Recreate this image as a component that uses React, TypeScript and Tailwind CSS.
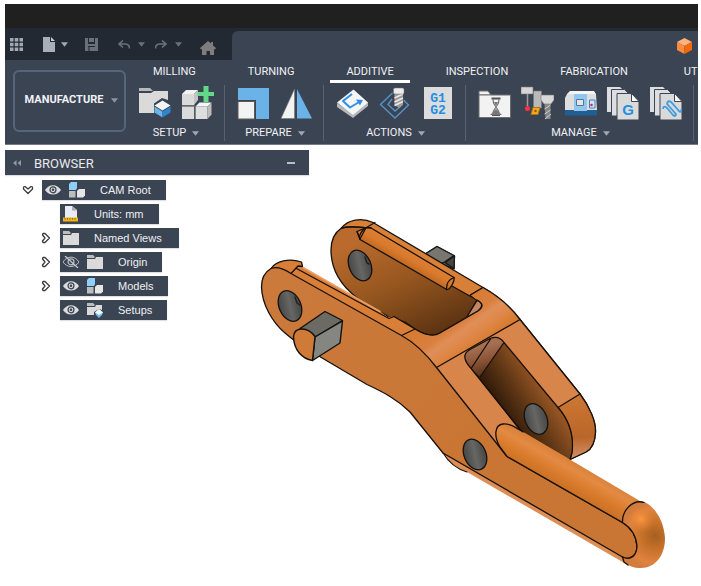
import type { ReactNode } from "react";
import { clsx } from "clsx";

function Caret({ className }: { className?: string }) {
  return (
    <svg viewBox="0 0 8 5" className={clsx("h-[5px] w-[7px] shrink-0", className)} aria-hidden>
      <path d="M0 0h8L4 5z" fill="currentColor" />
    </svg>
  );
}

/* ---------- Ribbon icons, drawn on a 33px grid ---------- */

function Icon({ children }: { children: ReactNode }) {
  return (
    <svg viewBox="0 0 33 35" className="h-[35px] w-[33px]" aria-hidden>
      {children}
    </svg>
  );
}

const icons = {
  newSetup: (
    <Icon>
      <path d="M1 3h11l3 3H1z" fill="#b9b9b9" />
      <path d="M1 8h12l3-2h14v9l-6-2-8 5.500v9.500H1z" fill="#dadada" />
      <path d="M24.500 15.500l8 5-8 5-8-5z" fill="#f4f5f6" />
      <path d="M16.500 21.500l8 5v6l-8-5z" fill="#6cb5ea" />
      <path d="M32.500 21.500l-8 5v6l8-5z" fill="#2b86cc" />
    </Icon>
  ),
  createStock: (
    <Icon>
      <path d="M1 9l4-4h12l-4 4z" fill="#f2f2f2" />
      <path d="M1 9h12v11H1zM1 21.500h12V34H1z" fill="#dadada" />
      <path d="M14.500 21.500l4-4h12l-4 4z" fill="#f6f6f6" />
      <path d="M14.500 21.500h12V34h-12z" fill="#dedede" />
      <path d="M26.500 21.500l4-4v12l-4 4.500z" fill="#bcbcbc" />
      <path d="M13 9l4-4v10l-4 5z" fill="#c4c4c4" />
      <path d="M1 20.700h13v13" fill="none" stroke="#6f747c" />
      <path d="M22.500 1h5v6h6v4h-6v6h-5v-6h-6V7h6z" fill="#62d987" />
    </Icon>
  ),
  orient: (
    <Icon>
      <path d="M1 3h31v31H19V15H1z" fill="#6ab2e8" />
      <path d="M1 16.500h16.500V34H1z" fill="#f3f3f3" stroke="#5a5a5a" />
    </Icon>
  ),
  mirror: (
    <Icon>
      <path d="M14.500 4v29.500H1z" fill="#f3f3f3" stroke="#777" strokeWidth="0.600" />
      <path d="M17 4v29.500h15z" fill="#6ab2e8" />
    </Icon>
  ),
  toolpath: (
    <Icon>
      <path d="M1 18l16 11 15-12v4L17 33 1 22z" fill="#b5b7b9" />
      <path d="M1 17.500L17.500 4.500 32 17.500 17 30z" fill="#f6f6f6" />
      <path d="M16 9l-9 7L14 22.500l10-6" fill="none" stroke="#2f8eea" strokeWidth="2" strokeLinejoin="round" />
      <path d="M20 14.500l7 .500-3 5.500z" fill="#2f8eea" />
    </Icon>
  ),
  simulate: (
    <Icon>
      <path d="M13.500 8L1.500 19.500 16 33l13.500-13-5-5M13 14l-4 5.500L16 26l6-5" fill="none" stroke="#5593c6" strokeWidth="1.400" />
      <path d="M15.500 7.500h8.500V20l-4 3-4.500-3z" fill="#9c9a98" />
      <path d="M15.500 13l8.500-4M15.500 17l8.500-4M15.500 20.500l8.500-4" stroke="#e8e8e8" strokeWidth="1.500" />
      <rect x="14.500" y="3" width="10.500" height="6" rx="1.500" fill="#ececec" stroke="#777" strokeWidth="0.500" />
    </Icon>
  ),
  postProcess: (
    <Icon>
      <path d="M2 2h28v32H2z" fill="#dcdcdc" />
      <text x="16" y="17" textAnchor="middle" fontSize="13" className="font-['Liberation_Mono',monospace] font-bold" fill="#218fe5">
        G1
      </text>
      <text x="16" y="29" textAnchor="middle" fontSize="13" className="font-['Liberation_Mono',monospace] font-bold" fill="#218fe5">
        G2
      </text>
    </Icon>
  ),
  taskManager: (
    <Icon>
      <path d="M1 6h9l3 4H1z" fill="#f2f2f2" stroke="#6e6e6e" />
      <path d="M1 10h31.500v22.500H1z" fill="#f2f2f2" stroke="#6e6e6e" />
      <path d="M13.500 13.500h9M14 30h8" stroke="#555" strokeWidth="2" />
      <path d="M15 14l.500 4 2.500 4-2.500 4-.500 4M21 14l-.500 4-2.500 4 2.500 4 .500 4" fill="none" stroke="#777" strokeWidth="1.200" />
      <path d="M16 17h4l-2 4zM12 30l6-6 6 6z" fill="#777" />
    </Icon>
  ),
  toolLibrary: (
    <Icon>
      <path d="M0 2h12v7H0z" fill="#d6d6d6" stroke="#777" strokeWidth="0.600" />
      <path d="M6.500 9v12" stroke="#9b9b9b" strokeWidth="1.500" />
      <circle cx="6.500" cy="23.500" r="2.500" fill="#ff303f" />
      <path d="M12.500 6h8v17h-8z" fill="#b9b9b9" stroke="#777" strokeWidth="0.600" />
      <path d="M12 22.500h7l-2 7h-7z" fill="#f3a91d" stroke="#b4750d" />
      <circle cx="14.500" cy="26" r="1.200" fill="#8a5a08" />
      <path d="M20 10h13v5l-3 4h-7l-3-4z" fill="#d8d8d8" stroke="#777" strokeWidth="0.600" />
      <path d="M23.500 19h6v15h-5z" fill="#87888a" />
      <path d="M23.500 24l6-4M23.500 29l6-4M24 34l6-5" stroke="#d0d0d0" />
    </Icon>
  ),
  machineLibrary: (
    <Icon>
      <path d="M6 6h24l2 3H3z" fill="#f5f5f5" />
      <path d="M3 9h29l1 16H1V13z" fill="#dedede" />
      <path d="M1 25h32v5.500H1z" fill="#1f5f93" />
      <path d="M10 9h13v17H10z" fill="#93c5ef" />
      <path d="M12.500 14.500h7v6h-7z" fill="#e5e5e5" stroke="#4a78a0" />
      <path d="M25.500 15h5.500v8h-5.500z" fill="#d2e3f2" stroke="#3584c5" />
      <circle cx="27.500" cy="20" r="1.300" fill="#e02853" />
    </Icon>
  ),
  postLibrary: (
    <Icon>
      <path d="M0 2h13l3 3v22H0z" fill="#dedee2" />
      <path d="M4.500 4.500h13l4 4V31h-17z" fill="#dedee2" stroke="#3b4453" />
      <path d="M10 8.500h14.500l7.500 8V35H10z" fill="#dadada" stroke="#3b4453" />
      <path d="M24.500 8.500v8H32z" fill="#fff" stroke="#3b4453" />
      <text x="21" y="30" textAnchor="middle" fontSize="15" className="font-['Liberation_Sans',sans-serif] font-bold" fill="#218fe5">
        G
      </text>
    </Icon>
  ),
  templateLibrary: (
    <Icon>
      <path d="M0 2h13l3 3v22H0z" fill="#dedee2" />
      <path d="M4.500 4.500h13l4 4V31h-17z" fill="#dedee2" stroke="#3b4453" />
      <path d="M10 8.500h14.500l7.500 8V35H10z" fill="#dadada" stroke="#3b4453" />
      <path d="M24.500 8.500v8H32z" fill="#fff" stroke="#3b4453" />
      <path
        d="M13 24c0-3 2-3 4-1l6 7c2 2 4 0 2-2l-7-8c-2-2 0-5 3-3l8 9c2 2 3 0 2-2"
        fill="none"
        stroke="#3f9be0"
        strokeWidth="1.800"
      />
    </Icon>
  ),
};

const groups = [
  {
    name: "SETUP",
    tools: [
      { label: "New Setup", icon: icons.newSetup },
      { label: "Create Stock", icon: icons.createStock },
    ],
  },
  {
    name: "PREPARE",
    tools: [
      { label: "Orient", icon: icons.orient },
      { label: "Mirror", icon: icons.mirror },
    ],
  },
  {
    name: "ACTIONS",
    tools: [
      { label: "Generate", icon: icons.toolpath },
      { label: "Simulate", icon: icons.simulate },
      { label: "Post Process", icon: icons.postProcess },
    ],
  },
  {
    name: "MANAGE",
    tools: [
      { label: "Task Manager", icon: icons.taskManager },
      { label: "Tool Library", icon: icons.toolLibrary },
      { label: "Machine Library", icon: icons.machineLibrary },
      { label: "Post Library", icon: icons.postLibrary },
      { label: "Template Library", icon: icons.templateLibrary },
    ],
  },
];

const tabs = ["MILLING", "TURNING", "ADDITIVE", "INSPECTION", "FABRICATION", "UTILITIES"];

function QuickAccess() {
  return (
    <div className="flex h-8 w-[227px] shrink-0 items-center pl-[5px] text-[#68707c]">
      <button type="button" aria-label="Data panel">
        <svg viewBox="0 0 13 13" className="size-[13px]" fill="#a3a9b4" aria-hidden>
          <path d="M0 0h3.500v3.500H0zM4.700 0h3.600v3.500H4.700zM9.500 0H13v3.500H9.500zM0 4.700h3.500v3.600H0zM4.700 4.700h3.600v3.600H4.700zM9.500 4.700H13v3.600H9.500zM0 9.500h3.500V13H0zM4.700 9.500h3.600V13H4.700zM9.500 9.500H13V13H9.500z" />
        </svg>
      </button>
      <button type="button" aria-label="File" className="ml-5 flex items-center gap-1.5 text-[#a3a9b4]">
        <svg viewBox="0 0 12 15" className="h-[15px] w-3" aria-hidden>
          <path d="M0 0h7v5h5v10H0z" fill="#a9aebb" />
          <path d="M8 0v4h4z" fill="#c8ccd4" />
        </svg>
        <Caret />
      </button>
      <button type="button" aria-label="Save" className="ml-[17px]">
        <svg viewBox="0 0 13 13" className="size-[13px]" aria-hidden>
          <path d="M0 0h3v6h7V0h3v13H0z" fill="#68707c" />
          <path d="M4 0h5v4H4z" fill="#68707c" />
          <path d="M3 8.500h7M4 8v5" stroke="#232932" />
        </svg>
      </button>
      <button type="button" aria-label="Undo" className="ml-5 flex items-center gap-2">
        <svg viewBox="0 0 12 9" className="h-[9px] w-3" aria-hidden>
          <path d="M1 4h6c3 0 4.500 1.500 4.500 4.500M5 .500L1 4l4 3.500" fill="none" stroke="currentColor" strokeWidth="1.600" />
        </svg>
        <Caret />
      </button>
      <button type="button" aria-label="Redo" className="ml-2.5 flex items-center gap-2">
        <svg viewBox="0 0 12 9" className="h-[9px] w-3" aria-hidden>
          <path d="M11 4H5C2 4 .500 5.500 .500 8.500M7 .500L11 4 7 7.500" fill="none" stroke="currentColor" strokeWidth="1.600" />
        </svg>
        <Caret />
      </button>
      <button type="button" aria-label="Home" className="mt-2 ml-[18px]">
        <svg viewBox="0 0 16 14" className="h-3.5 w-4" fill="#7d7d7d" aria-hidden>
          <path d="M8 0l3 2.500V1h2v3.500L16 7l-1 1.500-1-.500v6h-4v-4H6.500v4H2V8l-1 .500L0 7z" />
        </svg>
      </button>
    </div>
  );
}

function Ribbon() {
  return (
    <header className="overflow-hidden bg-[#232932] font-['Roboto',sans-serif] text-[11px] text-[#f0f1f3]">
      <div className="h-6 bg-[#202020]" />
      <div className="flex items-end">
        <QuickAccess />
        <div className="flex h-[29px] min-w-0 flex-1 items-center justify-end rounded-tl-md bg-[#3b4453] pr-1.5">
          <svg viewBox="0 0 15 16" className="h-4 w-[15px]" aria-hidden>
            <path d="M7.500 0L15 4 7.500 8 0 4z" fill="#ffb27b" />
            <path d="M0 4l7.500 4v8L0 12z" fill="#ff8c3e" />
            <path d="M15 4L7.500 8v8l7.500-4z" fill="#f36a0c" />
          </svg>
        </div>
      </div>
      <div className="flex border-b border-[#747b88] bg-[#3b4453] pl-2">
        <button
          type="button"
          className="mt-2.5 flex h-[62px] w-[113px] shrink-0 items-center justify-center gap-2 rounded-md border-2 border-[#56657a] pb-0.5 pl-1 font-bold"
        >
          MANUFACTURE
          <Caret className="text-[#8d96a4]" />
        </button>
        <div className="min-w-0 flex-1">
          <nav className="flex gap-5 pl-[11px]" aria-label="Workspaces">
            {tabs.map((tab) => (
              <a
                key={tab}
                href={`#${tab.toLowerCase()}`}
                className={clsx(
                  "border-b-[3px] px-4 pt-1 leading-4 last:pl-5",
                  tab === "ADDITIVE" ? "border-white" : "border-transparent"
                )}
              >
                {tab}
              </a>
            ))}
          </nav>
          <div className="flex pt-0.5 pb-[3px]">
            {groups.map((group) => (
              <section key={group.name} className="shrink-0 border-r border-[#566173] pr-2.5 pl-3">
                <div className="flex gap-2.5">
                  {group.tools.map((tool) => (
                    <button key={tool.label} type="button" aria-label={tool.label}>
                      {tool.icon}
                    </button>
                  ))}
                </div>
                <button type="button" className="mx-auto mt-[5px] flex items-center gap-1.5 leading-4">
                  {group.name}
                  <Caret className="text-[#a0a7b2]" />
                </button>
              </section>
            ))}
          </div>
        </div>
      </div>
    </header>
  );
}

/* ---------- Browser tree ---------- */

function Eye({ off }: { off?: boolean }) {
  return (
    <svg viewBox="0 0 16 12" className="h-3 w-4 shrink-0" aria-hidden>
      <path d="M0 6C4-.500 12-.500 16 6 12 12 4 12 0 6z" fill={off ? "none" : "#dedede"} stroke={off ? "#b9bdc4" : "none"} />
      <circle cx="8" cy="5.800" r="3" fill={off ? "none" : "#dedede"} stroke={off ? "#b9bdc4" : "#3b4453"} strokeWidth="1.200" />
      {off ? <path d="M2 0l13 12" stroke="#c9ccd1" strokeWidth="1.200" /> : <circle cx="8" cy="5.800" r="1.300" fill="#3b4453" />}
    </svg>
  );
}

const nodeIcons = {
  cubes: (
    <>
      <path d="M0 2l2-2h6v6L7 8H0z" fill="#8fd0fa" />
      <path d="M0 9h6.500v6.500H0z" fill="#bdbdbd" />
      <path d="M8 9l2-2h6v6.500l-2 2H8z" fill="#e6e6e6" />
    </>
  ),
  units: (
    <>
      <path d="M2 0h7l5 4v8H2z" fill="#e9ebf5" />
      <path d="M9 0v4.500h5z" fill="#a5a9b5" />
      <path d="M0 11.500h15V15.500H0z" fill="#efb51c" />
      <path d="M2 12v1.500M4.500 12v1.500M7 12v1.500M9.500 12v1.500M12 12v1.500" stroke="#8c650c" />
    </>
  ),
  folder: (
    <>
      <path d="M0 1h6l2 2-1 1H0z" fill="#bdbdbd" />
      <path d="M0 5h8l1-2h7v12H0z" fill="#dadada" />
    </>
  ),
  setups: (
    <>
      <path d="M0 1h6l2 2-1 1H0z" fill="#bdbdbd" />
      <path d="M0 5h8l1-2h6v5l-3-1-5 3v3H0z" fill="#dadada" />
      <path d="M12 7l4 3.500-1 2.500-3 3-3-3-1-2.500z" fill="#71b8ec" />
      <path d="M12 7l4 3.500-4 2.500-4-2.500z" fill="#f3f7fa" />
    </>
  ),
};

type TreeNode = {
  label: string;
  icon: keyof typeof nodeIcons;
  eye?: "on" | "off";
  expander?: "open" | "closed";
  root?: boolean;
};

const nodes: TreeNode[] = [
  { label: "CAM Root", icon: "cubes", eye: "on", expander: "open", root: true },
  { label: "Units: mm", icon: "units" },
  { label: "Named Views", icon: "folder", expander: "closed" },
  { label: "Origin", icon: "folder", eye: "off", expander: "closed" },
  { label: "Models", icon: "cubes", eye: "on", expander: "closed" },
  { label: "Setups", icon: "setups", eye: "on" },
];

function BrowserPanel() {
  return (
    <aside className="z-10 col-start-1 row-start-1 w-[304px] self-start">
      <div className="flex h-[25px] items-center bg-[#3b4453] pr-3.5 pl-2 text-[#e8eaed] shadow-[0_1px_1px_rgba(0,0,0,0.12)]">
        <svg viewBox="0 0 8 6" className="h-1.5 w-2" fill="#8f98a6" aria-hidden>
          <path d="M3.500 0v6L0 3zM8 0v6L4.500 3z" />
        </svg>
        <h2 className="ml-[13px] pt-0.5 font-['Roboto',sans-serif] text-[13px] leading-5">BROWSER</h2>
        <button type="button" aria-label="Collapse" className="ml-auto h-0.5 w-2 bg-[#b9bec7]" />
      </div>
      <ul className="mt-[5px] flex flex-col gap-1 font-['Liberation_Sans',sans-serif] text-[11px] text-[#eef0f2]">
        {nodes.map((node) => (
          <li key={node.label} className={clsx("flex h-5 items-center", node.root ? "pl-4" : "pl-[34px]")}>
            <div className="w-[21px] shrink-0">
              {node.expander && (
                <button type="button" aria-label={`Toggle ${node.label}`} className="ml-px flex">
                  <svg
                    viewBox="0 0 12 10"
                    className={clsx("h-2.5 w-3", node.expander === "closed" && "-rotate-90")}
                    fill="none"
                    stroke="#3c3c3c"
                    strokeWidth="1.300"
                    strokeLinejoin="round"
                    aria-hidden
                  >
                    <path d="M1.500 2l1.500-.500 3 2.500 3-2.500 1.500.500v2L6 8.500 1.500 4z" />
                  </svg>
                </button>
              )}
            </div>
            <div
              className={clsx(
                "flex h-5 items-center bg-[#3b4453] pl-[3px] shadow-[0_1px_1px_rgba(0,0,0,0.12)]",
                node.label === "Named Views" ? "pr-[17px]" : "pr-[15px]"
              )}
            >
              {node.eye && (
                <span className="mr-2">
                  <Eye off={node.eye === "off"} />
                </span>
              )}
              <svg viewBox="0 0 16 16" className="size-4" aria-hidden>
                {nodeIcons[node.icon]}
              </svg>
              <span className="ml-[15px] whitespace-nowrap">{node.label}</span>
            </div>
          </li>
        ))}
      </ul>
    </aside>
  );
}

/* ---------- 3D part ---------- */

function Hole({ x, y }: { x: number; y: number }) {
  return (
    <g transform={`translate(${x} ${y}) rotate(-24)`}>
      <ellipse rx="10.800" ry="16" fill="url(#bore)" stroke="#15110d" strokeWidth="1.300" />
    </g>
  );
}

function Part() {
  return (
    <svg
      viewBox="255 210 415 366"
      className="col-start-1 row-start-1 mt-[60px] ml-[250px] h-[366px] w-[415px]"
      role="img"
      aria-label="Lever part"
      strokeLinejoin="round"
      strokeLinecap="round"
    >
      <defs>
        <linearGradient id="bore" x1="0" y1="0" x2="1" y2="0.300">
          <stop offset="0" stopColor="#3f403d" />
          <stop offset="0.600" stopColor="#666764" />
          <stop offset="1" stopColor="#4b4c49" />
        </linearGradient>
        <linearGradient id="inner" gradientUnits="userSpaceOnUse" x1="375" y1="235" x2="425" y2="345">
          <stop offset="0" stopColor="#b96a2c" />
          <stop offset="0.450" stopColor="#95561f" />
          <stop offset="1" stopColor="#583011" />
        </linearGradient>
        <linearGradient id="face" gradientUnits="userSpaceOnUse" x1="270" y1="280" x2="470" y2="430">
          <stop offset="0" stopColor="#cb7a3c" />
          <stop offset="1" stopColor="#c97635" />
        </linearGradient>
        <linearGradient id="bridge" gradientUnits="userSpaceOnUse" x1="444" y1="313" x2="473" y2="354">
          <stop offset="0" stopColor="#d67b32" />
          <stop offset="0.350" stopColor="#d9803f" />
          <stop offset="0.500" stopColor="#e08e59" />
          <stop offset="0.700" stopColor="#de8747" />
          <stop offset="1" stopColor="#d47728" />
        </linearGradient>
        <linearGradient id="pocket" gradientUnits="userSpaceOnUse" x1="488" y1="395" x2="530" y2="368">
          <stop offset="0" stopColor="#2a1708" />
          <stop offset="0.500" stopColor="#5d3515" />
          <stop offset="1" stopColor="#945423" />
        </linearGradient>
        <linearGradient id="fillet" gradientUnits="userSpaceOnUse" x1="487" y1="375" x2="480" y2="347">
          <stop offset="0" stopColor="#54301a" />
          <stop offset="0.500" stopColor="#8a5234" />
          <stop offset="1" stopColor="#a56f52" />
        </linearGradient>
        <linearGradient id="handle" gradientUnits="userSpaceOnUse" x1="580" y1="465" x2="565" y2="492">
          <stop offset="0" stopColor="#d9813a" />
          <stop offset="0.250" stopColor="#e38a43" />
          <stop offset="0.600" stopColor="#d97b2c" />
          <stop offset="1" stopColor="#c76e24" />
        </linearGradient>
        <linearGradient id="tube" gradientUnits="userSpaceOnUse" x1="411" y1="251" x2="403" y2="265">
          <stop offset="0" stopColor="#dc7f36" />
          <stop offset="0.500" stopColor="#d9792c" />
          <stop offset="1" stopColor="#bd6823" />
        </linearGradient>
        <radialGradient id="cap" gradientUnits="userSpaceOnUse" cx="655" cy="536" r="34">
          <stop offset="0" stopColor="#a55f22" />
          <stop offset="0.350" stopColor="#c36f28" />
          <stop offset="0.800" stopColor="#df833e" />
          <stop offset="1" stopColor="#d17b3d" />
        </radialGradient>
        <radialGradient id="glow" gradientUnits="userSpaceOnUse" cx="641" cy="519" r="14">
          <stop offset="0" stopColor="#fb963f" />
          <stop offset="1" stopColor="#e07f32" stopOpacity="0" />
        </radialGradient>
        <linearGradient id="heel" gradientUnits="userSpaceOnUse" x1="577" y1="400" x2="582" y2="458">
          <stop offset="0" stopColor="#cb7532" />
          <stop offset="0.650" stopColor="#b8662a" />
          <stop offset="1" stopColor="#d49169" />
        </linearGradient>
      </defs>

      {/* far pin */}
      <g stroke="#181818" strokeWidth="1.300">
        <path d="M426 253.500L437 246.500 454.500 256l-.500 13-14-6z" fill="#5a5a56" />
        <path d="M426 253.500L437 246.500l17 9-9.500 6.500-5 2z" fill="#77776f" />
        <path d="M454.500 256l-9.500 6.500 9 6z" fill="#454542" />
      </g>

      {/* far arm: rim, inner wall and top */}
      <g stroke="#17100a" strokeWidth="1.300">
        <path
          d="M341.500 228C348 220 361 217 373 222.500L483 287.500C500 297 510 306 520 319.500L580 394C590 407 596 422 595.500 432C595 444 590 450 586 452L570 459.500L440 400L400 320L350 290z"
          fill="#d98038"
        />
        <path
          d="M341.500 228C334 233 331 241 331 250C331 270 342 286 356 297C367 305 378 310 388 316.500L405 322L415 329C423 334 432 338 440 333L467 317L477 300L451 285.500L360 239L357 231.500L366 227.700C357 227 349 226 341.500 228z"
          fill="url(#inner)"
        />
        <path d="M466.500 317.500L477 300.500C483 302 483 307 478 311z" fill="#c48563" />
        <path d="M477 300l-6.500-5L483 287.500" fill="none" />
        <path
          d="M371 228L454 277.500C455 281 450 290 446.700 289.500L360 239.500C358 236 362 230 366 227.700z"
          fill="url(#tube)"
        />
        <path d="M454 277.500c-5 2-8 6-7.300 12M357 231.500l3 7.500 6-11.300M341.500 228c8-2 17-1 24.500-.300l9-5.200M366 227.700h5" fill="none" />
      </g>
      <Hole x={360} y={265.500} />
      <path d="M365 257l2 6 2 1" fill="none" stroke="#222" strokeWidth="1.500" />

      {/* bridge */}
      <path
        d="M401.500 335.500L415 329C423 334 432 338 440 333L467 317L478 311C484 307 483 303 477 300L470.500 295L483 287.500C500 297 510 306 520 319.500L436.500 367.500C427 355 417 344 401.500 335.500z"
        fill="url(#bridge)"
      />
      <path
        d="M415 329C423 334 432 338 440 333L478 311C484 307 483 303 477 300M470.500 295L483 287.500C500 297 510 306 520 319.500"
        fill="none"
        stroke="#17100a"
        strokeWidth="1.300"
      />

      {/* fork surfaces */}
      <path
        d="M436.500 367.500L520 319.500L580 394L558 407.500L570 459L523 445L507 457z"
        fill="#d8854b"
      />
      <path d="M436.500 367.500L520 319.500L580 394" fill="none" stroke="#17100a" strokeWidth="1.300" />
      <path
        d="M558 407.500L580 394C590 407 596 422 595.500 432C595 444 590 450 586 452L570 459.500C575 445 572 424 558 407.500z"
        fill="url(#heel)"
        stroke="#17100a"
        strokeWidth="1.300"
      />
      <path
        d="M504 342.500L558 407.500C569 420 574 436 572 453L570 459.500L520 431L471.500 369C464 361 462 354 470 349.500L490 338.500C496 336 501 338 504 342.500z"
        fill="url(#pocket)"
      />
      <path
        d="M504 342.500L480 377L471.500 369C464 361 462 354 470 349.500L490 338.500C496 336 501 338 504 342.500z"
        fill="url(#fillet)"
      />
      <path
        d="M504 342.500L558 407.500C569 420 574 436 572 453L570 459.500M523 433L471.500 369C464 361 462 354 470 349.500L490 338.500C496 336 501 338 504 342.500L480 377M490.500 339L471.500 368"
        fill="none"
        stroke="#17100a"
        strokeWidth="1.300"
      />
      <Hole x={536} y={419} />

      {/* near arm top strip */}
      <path
        d="M271 268.500C276 261 289 258 301.500 262L303 267L380 311L387 317L394 316.500L415 329L401.500 335.500L291 273.500z"
        fill="#d87e37"
      />
      <path d="M303 267.500L380 311.500" stroke="#e8a06b" strokeWidth="1.500" />
      <path
        d="M271 268.500C276 261 289 258 301.500 262L302.500 266.500L298 266L291 273.500M296.500 268.500L389 318.500L394 316.500L415 329L401.500 335.500"
        fill="none"
        stroke="#17100a"
        strokeWidth="1.300"
      />

      {/* underside fillet of the handle */}
      <path d="M443 453C449 463 457 469 467 472L626 564L623 556z" fill="#dd8e55" />
      <path d="M443 453C449 463 457 469 467 472" fill="none" stroke="#17100a" strokeWidth="1.100" />

      {/* front face */}
      <path
        d="M291 273.500C281 267 275 267 271 268.500C263 273 261.500 280 261.500 287C262 304 272 322 285 333C292 339 301 346 312 352L367 384.500C383 392 397 399 410 412L443 453L622.500 557C631 561 637 555 637 546C636 535 630 527 622.500 522.500L507 456.500L436.500 367.500C427 355 417 344 401.500 335.500z"
        fill="url(#face)"
        stroke="#17100a"
        strokeWidth="1.300"
      />
      <Hole x={290} y={306} />
      <path d="M295 297l2 6 3 2" fill="none" stroke="#222" strokeWidth="1.500" />
      <Hole x={475} y={454.500} />

      {/* handle */}
      <path
        d="M507 456.500L500 447C494 437 494 425 503 424C510 423.500 515 427 520 430L640 501C630 502 622 511 622.500 522.500z"
        fill="url(#handle)"
      />
      <path
        d="M622.500 522.500L507 456.500L500 447C494 437 494 425 503 424C510 423.500 515 427 523 432"
        fill="none"
        stroke="#17100a"
        strokeWidth="1.300"
      />
      <path
        d="M622.500 522.500C622 511 630 502 640 501C652 502 664 519 665 538C665 556 655 568 641 568C634 568 628 566 625 562L622.500 557C631 561 637 555 637 546C636 535 630 527 622.500 522.500z"
        fill="url(#cap)"
      />
      <path d="M623 522C622 511 630 502 640 501C650 502 660 515 662 530L640 536C636 530 629 526 623 522z" fill="url(#glow)" />
      <path
        d="M644 502.500C633 499 622 510 622.500 522.500C630 527 636 535 637 546C637 555 631 561 622.500 557L624 562L628 565"
        fill="none"
        stroke="#17100a"
        strokeWidth="1.300"
      />

      {/* near pin */}
      <g stroke="#15110d" strokeWidth="1.400">
        <path d="M300 328.500L325 311.500l17.500 9L315 337z" fill="#6b6b63" />
        <path d="M315 337l27.500-16-2.500 22-27.500 17.500z" fill="#858681" />
        <path d="M315 336.500C307 326 294 327 293.500 337C294 350 302 359 312.500 360.500z" fill="#d07a38" />
      </g>
    </svg>
  );
}

export default function App() {
  return (
    <div className="min-h-screen bg-white pt-1 pr-[3px] pl-[5px]">
      <Ribbon />
      <main className="mt-[5px] grid overflow-hidden">
        <BrowserPanel />
        <Part />
      </main>
    </div>
  );
}
